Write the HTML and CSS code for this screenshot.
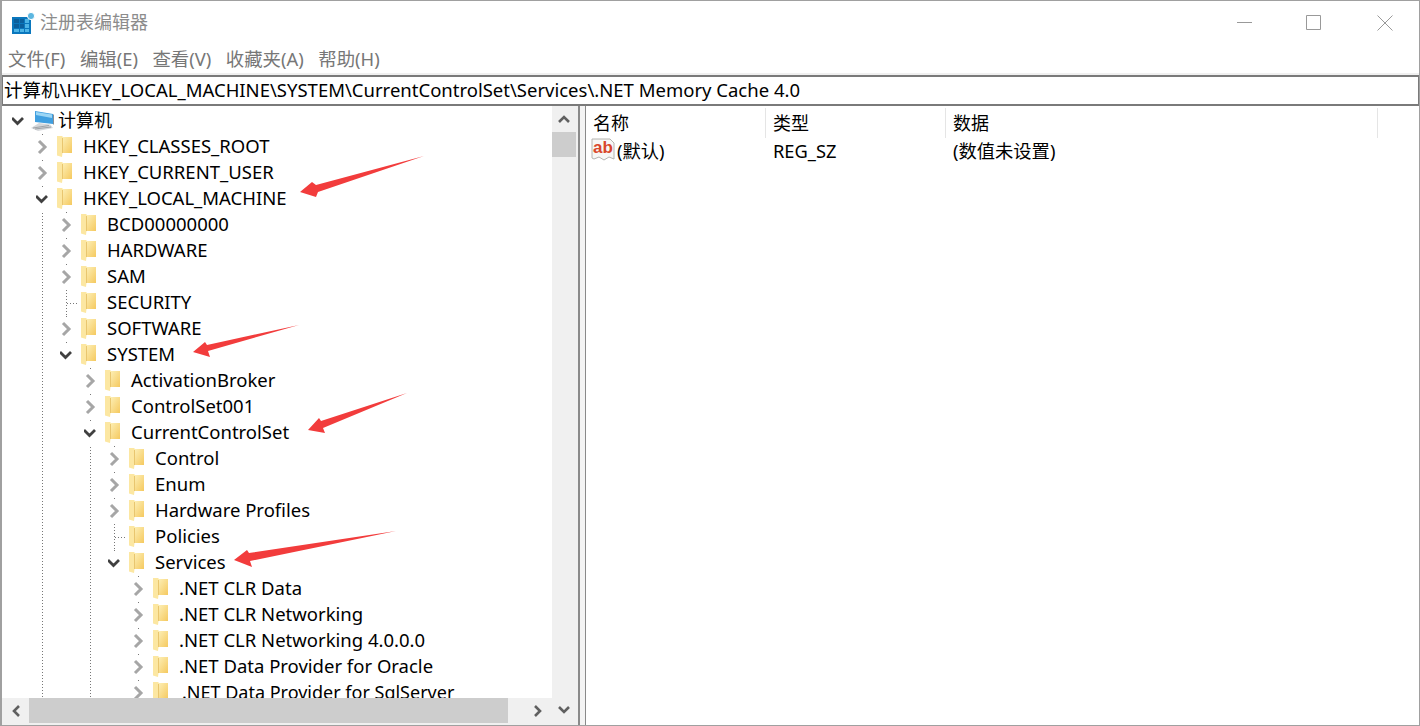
FILE: index.html
```html
<!DOCTYPE html>
<html lang="zh-CN">
<head>
<meta charset="utf-8">
<title>注册表编辑器</title>
<link rel="stylesheet" href="styles.css">
</head>
<body>
<svg width="0" height="0" class="defs">
  <defs>
    <linearGradient id="fg" x1="0" y1="0" x2="1" y2="1">
      <stop offset="0" stop-color="#fdf0b8"/>
      <stop offset="1" stop-color="#f5c95f"/>
    </linearGradient>
    <symbol id="folder" viewBox="0 0 15 21">
      <path d="M5 1H15V17H5Z" fill="url(#fg)"/>
      <path d="M0 0H5.500V17L5 21L0 19.500Z" fill="#fce7a2"/>
      <path d="M5 2H6V17H5Z" fill="#e9c66f"/>
    </symbol>
    <symbol id="cr" viewBox="0 0 14 16"><path d="M3 2L9 8L3 14" fill="none" stroke="#a6a6a6" stroke-width="3"/></symbol>
    <symbol id="cd" viewBox="0 0 14 16"><path d="M0 5L5.500 10.500L11 5" fill="none" stroke="#404040" stroke-width="2.800"/></symbol>
  </defs>
</svg>
<main class="window">
  <header class="titlebar">
    <svg class="appicon" viewBox="0 0 24 24" width="24" height="24">
      <path d="M1 6H20V23H1Z" fill="#0a77bd"/>
      <path d="M3 8H8V12H3ZM9 8H13V12H9ZM3 13H8V17H3ZM9 13H13V17H9Z" fill="#0b5f9c"/>
      <path d="M14 8H18V12H14ZM14 13H18V17H14ZM3 18H8V21H3ZM9 18H13V21H9ZM14 18H18V21H14Z" fill="#4db4e6"/>
      <circle cx="20" cy="5" r="3.600" fill="#5cb6e0" stroke="#fff" stroke-width="1"/>
    </svg>
    <span class="title">注册表编辑器</span>
    <div class="controls">
      <svg width="15" height="15" viewBox="0 0 15 15"><path d="M0 7.500H15" stroke="#999" fill="none"/></svg>
      <svg class="mx" width="15" height="15" viewBox="0 0 15 15"><path d="M.5.5H14.500V14.500H.5Z" stroke="#999" fill="none"/></svg>
      <svg width="16" height="16" viewBox="0 0 16 16"><path d="M.5.5L15.500 15.500M15.500.5L.5 15.500" stroke="#999" fill="none"/></svg>
    </div>
  </header>
  <nav class="menubar">
    <span>文件(F)</span><span>编辑(E)</span><span>查看(V)</span><span>收藏夹(A)</span><span>帮助(H)</span>
  </nav>
  <div class="address">计算机\HKEY_LOCAL_MACHINE\SYSTEM\CurrentControlSet\Services\.NET Memory Cache 4.0</div>
  <div class="panes">
    <section class="treepane">
      <div class="treeview">
        <div class="row root">
          <span class="chev"><svg width="14" height="16"><use href="#cd"/></svg></span>
          <svg class="pc" viewBox="0 0 26 24" width="26" height="24">
            <path d="M6 2L24 5V15L6 13Z" fill="#3f9fe0"/>
            <path d="M7 3L23 5.500V9L7 6Z" fill="#9bd6f5"/>
            <path d="M24 5L25 6V16L24 15Z" fill="#8a8f96"/>
            <path d="M10 14L21 15.500L24 19L9 22L2 19Z" fill="#d5d7da"/>
            <path d="M4 19L20 16.500M6 20L22 18" stroke="#9ea3a8" fill="none"/>
          </svg>
          <span class="label cjk">计算机</span>
        </div>
        <ul class="tree">
          <li><div class="row"><span class="chev"><svg width="14" height="16"><use href="#cr"/></svg></span><svg class="fd"><use href="#folder"/></svg><span class="label">HKEY_CLASSES_ROOT</span></div></li>
          <li><div class="row"><span class="chev"><svg width="14" height="16"><use href="#cr"/></svg></span><svg class="fd"><use href="#folder"/></svg><span class="label">HKEY_CURRENT_USER</span></div></li>
          <li class="cont"><div class="row"><span class="chev"><svg width="14" height="16"><use href="#cd"/></svg></span><svg class="fd"><use href="#folder"/></svg><span class="label">HKEY_LOCAL_MACHINE</span></div>
            <ul class="tree">
              <li><div class="row"><span class="chev"><svg width="14" height="16"><use href="#cr"/></svg></span><svg class="fd"><use href="#folder"/></svg><span class="label">BCD00000000</span></div></li>
              <li><div class="row"><span class="chev"><svg width="14" height="16"><use href="#cr"/></svg></span><svg class="fd"><use href="#folder"/></svg><span class="label">HARDWARE</span></div></li>
              <li><div class="row"><span class="chev"><svg width="14" height="16"><use href="#cr"/></svg></span><svg class="fd"><use href="#folder"/></svg><span class="label">SAM</span></div></li>
              <li><div class="row"><span class="leaf"></span><svg class="fd"><use href="#folder"/></svg><span class="label">SECURITY</span></div></li>
              <li><div class="row"><span class="chev"><svg width="14" height="16"><use href="#cr"/></svg></span><svg class="fd"><use href="#folder"/></svg><span class="label">SOFTWARE</span></div></li>
              <li class="last"><div class="row"><span class="chev"><svg width="14" height="16"><use href="#cd"/></svg></span><svg class="fd"><use href="#folder"/></svg><span class="label">SYSTEM</span></div>
                <ul class="tree">
                  <li><div class="row"><span class="chev"><svg width="14" height="16"><use href="#cr"/></svg></span><svg class="fd"><use href="#folder"/></svg><span class="label">ActivationBroker</span></div></li>
                  <li><div class="row"><span class="chev"><svg width="14" height="16"><use href="#cr"/></svg></span><svg class="fd"><use href="#folder"/></svg><span class="label">ControlSet001</span></div></li>
                  <li><div class="row"><span class="chev"><svg width="14" height="16"><use href="#cd"/></svg></span><svg class="fd"><use href="#folder"/></svg><span class="label">CurrentControlSet</span></div>
                    <ul class="tree">
                      <li><div class="row"><span class="chev"><svg width="14" height="16"><use href="#cr"/></svg></span><svg class="fd"><use href="#folder"/></svg><span class="label">Control</span></div></li>
                      <li><div class="row"><span class="chev"><svg width="14" height="16"><use href="#cr"/></svg></span><svg class="fd"><use href="#folder"/></svg><span class="label">Enum</span></div></li>
                      <li><div class="row"><span class="chev"><svg width="14" height="16"><use href="#cr"/></svg></span><svg class="fd"><use href="#folder"/></svg><span class="label">Hardware Profiles</span></div></li>
                      <li><div class="row"><span class="leaf"></span><svg class="fd"><use href="#folder"/></svg><span class="label">Policies</span></div></li>
                      <li class="last"><div class="row"><span class="chev"><svg width="14" height="16"><use href="#cd"/></svg></span><svg class="fd"><use href="#folder"/></svg><span class="label">Services</span></div>
                        <ul class="tree">
                          <li><div class="row"><span class="chev"><svg width="14" height="16"><use href="#cr"/></svg></span><svg class="fd"><use href="#folder"/></svg><span class="label">.NET CLR Data</span></div></li>
                          <li><div class="row"><span class="chev"><svg width="14" height="16"><use href="#cr"/></svg></span><svg class="fd"><use href="#folder"/></svg><span class="label">.NET CLR Networking</span></div></li>
                          <li><div class="row"><span class="chev"><svg width="14" height="16"><use href="#cr"/></svg></span><svg class="fd"><use href="#folder"/></svg><span class="label">.NET CLR Networking 4.0.0.0</span></div></li>
                          <li><div class="row"><span class="chev"><svg width="14" height="16"><use href="#cr"/></svg></span><svg class="fd"><use href="#folder"/></svg><span class="label">.NET Data Provider for Oracle</span></div></li>
                          <li><div class="row"><span class="chev"><svg width="14" height="16"><use href="#cr"/></svg></span><svg class="fd"><use href="#folder"/></svg><span class="label shifted">.NET Data Provider for SqlServer</span></div></li>
                        </ul>
                      </li>
                    </ul>
                  </li>
                </ul>
              </li>
            </ul>
          </li>
        </ul>
      </div>
      <div class="vscroll">
        <button class="sbtn"><svg width="14" height="10" viewBox="0 0 14 10"><path d="M2 8L7 3L12 8" fill="none" stroke="#606060" stroke-width="2.600"/></svg></button>
        <div class="vtrack"><div class="vthumb"></div></div>
        <button class="sbtn"><svg width="14" height="10" viewBox="0 0 14 10"><path d="M2 2L7 7L12 2" fill="none" stroke="#606060" stroke-width="2.600"/></svg></button>
      </div>
      <div class="hscroll">
        <button class="hbtn"><svg width="10" height="14" viewBox="0 0 10 14"><path d="M8 2L3 7L8 12" fill="none" stroke="#606060" stroke-width="2.600"/></svg></button>
        <div class="hthumb"></div>
        <button class="hbtn end"><svg width="10" height="14" viewBox="0 0 10 14"><path d="M2 2L7 7L2 12" fill="none" stroke="#606060" stroke-width="2.600"/></svg></button>
      </div>
    </section>
    <section class="listpane">
      <div class="listhead">
        <div class="col c1">名称</div>
        <div class="col c2">类型</div>
        <div class="col c3">数据</div>
      </div>
      <div class="listrow">
        <div class="c1 cell">
          <svg class="ab" viewBox="0 0 24 24" width="24" height="24">
            <path d="M1 1H19L23 5V21L18 19L13 22L8 19L3 21L1 20Z" fill="#f7f7f5" stroke="#b4b4b0"/>
            <text x="2" y="15" class="abtext">ab</text>
          </svg>
          <span>(默认)</span>
        </div>
        <div class="c2 cell">REG_SZ</div>
        <div class="c3 cell">(数值未设置)</div>
      </div>
    </section>
  </div>
  <svg class="arrows" viewBox="0 0 1420 726" width="1420" height="726">
    <path d="M424 156L318 192L316 197L300 192L312 182L316 185Z"/>
    <path d="M299 325L208 351L210 357L193 352L205 342L207 345Z"/>
    <path d="M407 393L323 428L325 433L308 430L319 418L321 421Z"/>
    <path d="M396 531L250 561L252 567L234 560L247 550L249 553Z"/>
  </svg>
</main>
</body>
</html>
```
FILE: styles.css
```css
* { box-sizing: border-box; }
html, body { margin: 0; padding: 0; }
body { width: 1420px; height: 726px; overflow: hidden; background: #fff; color: #000;
  font-family: "Noto Sans", "Noto Sans CJK SC", sans-serif; font-size: 18px; }
.defs { position: absolute; }
.window { position: relative; width: 1420px; height: 726px; display: flex; flex-direction: column;
  border: 1px solid #a0a0a0; border-width: 1px 1px 1px 2px; background: #fff; }
.titlebar { height: 43px; display: flex; align-items: center; padding-left: 9px; flex: none; }
.appicon { flex: none; }
.title { margin-left: 5px; color: #8c8c8c; font-size: 18px; line-height: 24px; position: relative; top: -1px; }
.controls { margin-left: auto; display: flex; align-items: center; gap: 55px; padding-right: 26px; }
.mx { margin: 0 1px 0 -1px; }
.menubar { height: 27px; flex: none; margin-bottom: 2px; display: flex; align-items: center; padding-left: 6px; gap: 14.500px; color: #777; font-size: 18.400px; }
.address { height: 31px; flex: none; margin-top: 2px; border: 1px solid #7a7a7a; border-right-width: 1px;
  border-top: 2px solid #7a7a7a; border-bottom: 2px solid #7a7a7a;
  padding-left: 1px; line-height: 26px; white-space: nowrap; box-shadow: 0 -2px 0 #f0f0f0; font-size: 18.500px; }
.panes { flex: 1; min-height: 0; display: flex; background: #f4f4f4; }
.treepane { width: 578px; flex: none; display: grid; grid-template-columns: 550px 26px; grid-template-rows: 592px 25px;
  border-right: 2px solid #8a8a8a; background: #f0f0f0; }
.treeview { overflow: hidden; background: #fff; padding: 2px 0 0 3px; }
.tree { list-style: none; margin: 0; padding: 0 0 0 24px; }
.tree > li { background: repeating-linear-gradient(to bottom, #777 0 1px, transparent 1px 3px) no-repeat 13px 0 / 1px 100%; }
.tree > li.last { background-size: 1px 13px; }
.row { height: 26px; display: flex; align-items: center; white-space: nowrap; }
.chev { width: 24px; height: 24px; flex: none; display: flex; align-items: center; justify-content: center; background: #fff; margin-left: 2px; margin-right: -2px; }
.leaf { width: 24px; height: 1px; flex: none; margin-left: 2px; margin-right: -2px;
  background: repeating-linear-gradient(to right, transparent 0 12px, #777 12px 13px, transparent 13px 15px, #777 15px 16px, transparent 16px 18px, #777 18px 19px, transparent 19px 21px, #777 21px 22px, transparent 22px); }
.fd { width: 15px; height: 21px; flex: none; margin-left: 4px; margin-bottom: 2px; }
.pc { flex: none; }
.label { margin-left: 11px; line-height: 24px; font-size: 18.500px; }
.row .label { position: relative; top: -1px; }
.label.cjk { margin-left: 3px; font-size: 18px; }
.label.shifted { margin-left: 14px; font-size: 18px; }
.vscroll { grid-row: 1 / 3; grid-column: 2; display: flex; flex-direction: column; background: #f0f0f0; }
.sbtn { height: 26px; width: 24px; border: 0; padding: 0; background: none; display: flex; align-items: center; justify-content: center; flex: none; }
.vtrack { flex: 1; }
.vthumb { height: 25px; width: 24px; background: #cdcdcd; }
.hscroll { display: flex; height: 25px; background: #f0f0f0; align-items: stretch; }
.hbtn { width: 27px; border: 0; padding: 0; background: none; display: flex; align-items: center; justify-content: center; flex: none; }
.hbtn.end { margin-left: auto; padding-right: 2px; }
.hthumb { width: 479px; background: #cdcdcd; }
.listpane { flex: 1; margin-left: 5px; background: #fff; border-left: 1px solid #8a8a8a; }
.listhead { display: flex; height: 32px; padding-top: 2px; }
.col { border-right: 1px solid #e5e5e5; padding-left: 7px; line-height: 30px; }
.c1 { width: 180px; }
.c2 { width: 180px; }
.c3 { width: 432px; }
.listrow { display: flex; height: 24px; align-items: center; font-size: 18.300px; }
.cell { padding-left: 7px; display: flex; align-items: center; }
.c1.cell { padding-left: 5px; }
.ab { flex: none; margin-right: 2px; }
.abtext { font-family: "Liberation Sans", sans-serif; font-weight: 700; font-size: 17px; fill: #d9472b; }
.arrows { position: absolute; left: -2px; top: -1px; pointer-events: none; fill: #f23c3c; }
```
